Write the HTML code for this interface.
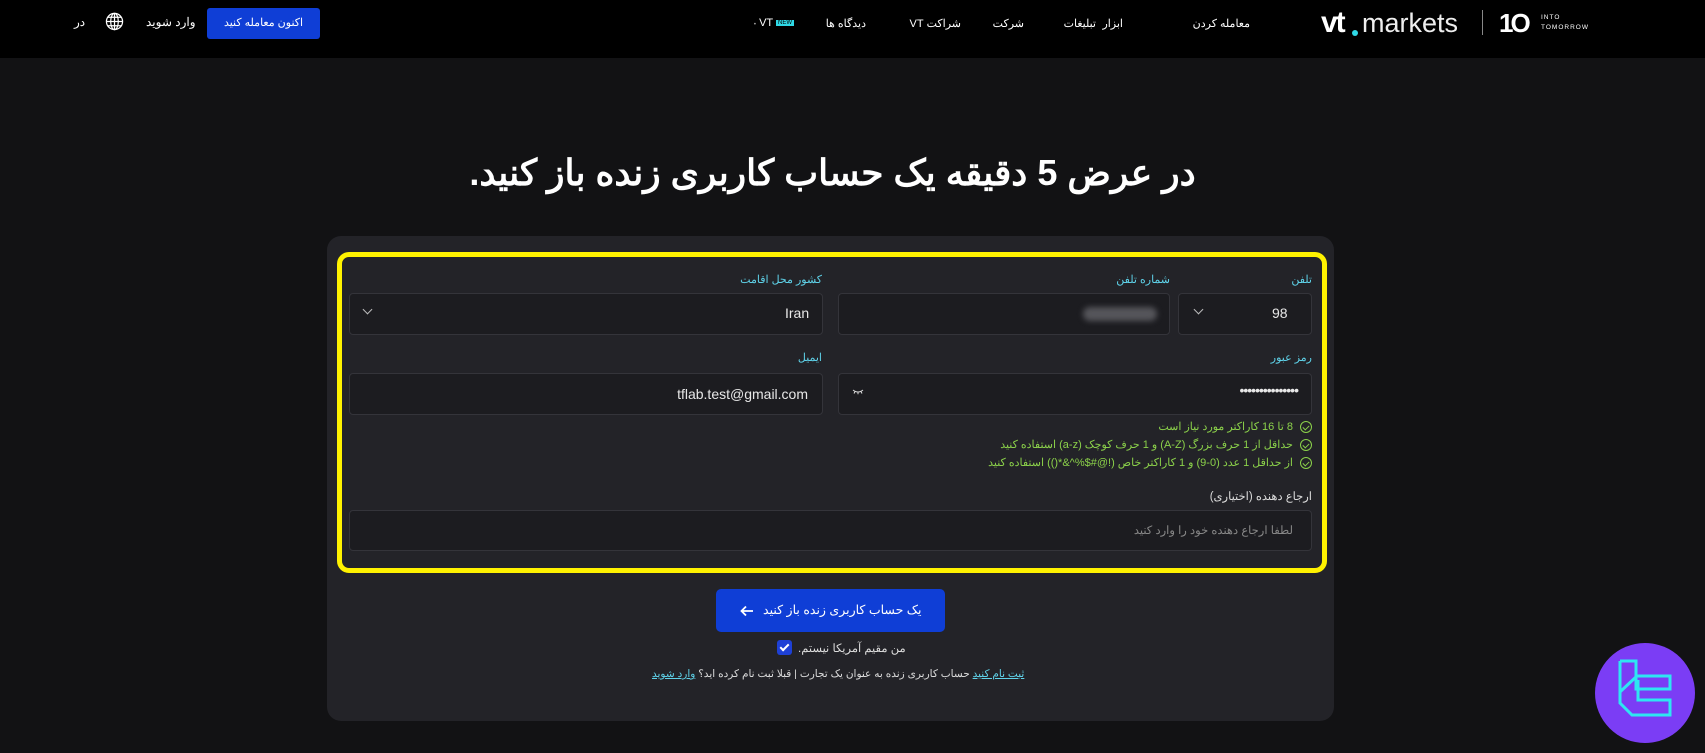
<!DOCTYPE html>
<html dir="ltr"><head><meta charset="utf-8">
<style>
*{box-sizing:border-box;margin:0;padding:0}
body{width:1705px;height:753px;background:#121214;overflow:hidden;position:relative;font-family:"Liberation Sans","Noto Sans CJK SC",sans-serif;color:#fff}
.a{position:absolute;white-space:nowrap}
.hdr{position:absolute;left:0;top:0;width:1705px;height:58px;background:#000}
.nav{font-size:11px;color:#fff;top:17px;direction:rtl}
.card{position:absolute;left:327px;top:236px;width:1007px;height:485px;background:#232328;border-radius:14px}
.yel{position:absolute;left:337px;top:252px;width:990px;height:321px;border:5px solid #fff200;border-radius:12px}
.lbl{font-size:11px;color:#5fd3ea;direction:rtl}
.inp{position:absolute;background:#1c1c20;border:1px solid #34343a;border-radius:4px}
.txt{font-size:14px;color:#e8e8e8}
.chev{width:7px;height:7px;border-right:1.3px solid #bbb;border-bottom:1.3px solid #bbb;transform:rotate(45deg)}
.val{font-size:11px;color:#8bd14a;direction:rtl;right:393px}
.ck{display:inline-block;width:12px;height:12px;border:1px solid #8bd14a;border-radius:50%;vertical-align:middle;margin-left:4px;position:relative}
.ck:after{content:"";position:absolute;left:3px;top:2px;width:3px;height:5px;border-right:1px solid #8bd14a;border-bottom:1px solid #8bd14a;transform:rotate(45deg)}
</style></head><body>
<div class="hdr"></div>
<div class="a" style="left:74px;top:15px;font-size:12px">در</div>
<svg class="a" style="left:105px;top:12px" width="19" height="19" viewBox="0 0 20 20" fill="none" stroke="#fff" stroke-width="1.3"><circle cx="10" cy="10" r="8.5"/><ellipse cx="10" cy="10" rx="4" ry="8.5"/><path d="M1.5 10h17M3 5.5h14M3 14.5h14M10 1.5v17"/></svg>
<div class="a" style="left:146px;top:15px;font-size:12px">وارد شوید</div>
<div class="a" style="left:207px;top:8px;width:113px;height:31px;background:#0f3ed6;border-radius:3px;font-size:11px;text-align:center;line-height:31px">اکنون معامله کنید</div>
<div class="a nav" style="right:911px;direction:ltr"><span style="font-size:6px;color:#aaa">•</span> VT <span style="background:#2fd9e6;color:#000;font-size:6px;padding:0 2px;vertical-align:middle">NEW</span></div>
<div class="a nav" style="right:839px">دیدگاه ها</div>
<div class="a nav" style="right:744px">شراکت VT</div>
<div class="a nav" style="right:681px">شرکت</div>
<div class="a nav" style="right:609px">تبلیغات</div>
<div class="a nav" style="right:582px">ابزار</div>
<div class="a nav" style="right:455px">معامله کردن</div>
<div class="a" style="left:1321px;top:6px;font-size:30px;font-weight:bold;letter-spacing:-2px">vt</div>
<div class="a" style="left:1352px;top:30px;width:6px;height:6px;background:#2fd9e6;border-radius:50%"></div>
<div class="a" style="left:1362px;top:8px;font-size:27px;color:#eee">markets</div>
<div class="a" style="left:1482px;top:10px;width:1px;height:25px;background:#888"></div>
<div class="a" style="left:1499px;top:8px;font-size:26px;font-weight:bold;letter-spacing:-3px">1O</div>
<div class="a" style="left:1541px;top:13px;font-size:6.5px;line-height:10px;letter-spacing:1px">INTO<br>TOMORROW</div>

<div class="a" style="left:-20px;width:1705px;top:152px;text-align:center;font-size:36px;font-weight:bold;direction:rtl">در عرض 5 دقیقه یک حساب کاربری زنده باز کنید.</div>

<div class="card"></div>
<div class="yel"></div>
<div class="a lbl" style="right:393px;top:273px">تلفن</div>
<div class="a lbl" style="right:535px;top:273px">شماره تلفن</div>
<div class="a lbl" style="right:883px;top:273px">کشور محل اقامت</div>
<div class="inp" style="left:1178px;top:293px;width:134px;height:42px"></div>
<div class="a txt" style="left:1195px;top:306px"><div class="chev"></div></div>
<div class="a txt" style="left:1272px;top:305px">98</div>
<div class="inp" style="left:838px;top:293px;width:332px;height:42px"></div>
<div class="a" style="left:1083px;top:307px;width:74px;height:14px;background:#55555a;border-radius:7px;filter:blur(3px)"></div>
<div class="inp" style="left:349px;top:293px;width:474px;height:42px"></div>
<div class="a" style="left:364px;top:306px"><div class="chev"></div></div>
<div class="a txt" style="left:785px;top:305px">Iran</div>

<div class="a lbl" style="right:393px;top:351px">رمز عبور</div>
<div class="a lbl" style="right:883px;top:351px">ایمیل</div>
<div class="inp" style="left:838px;top:373px;width:474px;height:42px"></div>
<svg class="a" style="left:852px;top:388px" width="12" height="8" viewBox="0 0 12 8" fill="none" stroke="#ddd" stroke-width="1"><path d="M1 2q5 4 10 0M3 3.5l-1 2M6 4.2v2M9 3.5l1 2"/></svg>
<div class="a txt" style="right:393px;top:382px;padding-right:14px;letter-spacing:-1px">•••••••••••••••</div>
<div class="inp" style="left:349px;top:373px;width:474px;height:42px"></div>
<div class="a txt" style="right:897px;top:386px">tflab.test@gmail.com</div>

<div class="a val" style="top:420px"><span class="ck"></span> 8 تا 16 کاراکتر مورد نیاز است</div>
<div class="a val" style="top:438px"><span class="ck"></span> حداقل از 1 حرف بزرگ (A-Z) و 1 حرف کوچک (a-z) استفاده کنید</div>
<div class="a val" style="top:456px"><span class="ck"></span> از حداقل 1 عدد (0-9) و 1 کاراکتر خاص (!@#$%^&amp;*()) استفاده کنید</div>

<div class="a" style="right:393px;top:489px;font-size:11.5px;color:#ddd;direction:rtl">ارجاع دهنده (اختیاری)</div>
<div class="inp" style="left:349px;top:510px;width:963px;height:41px"></div>
<div class="a" style="right:412px;top:523px;font-size:11.5px;color:#888;direction:rtl">لطفا ارجاع دهنده خود را وارد کنید</div>

<div class="a" style="left:716px;top:589px;width:229px;height:43px;background:#0f3ed6;border-radius:5px"></div>
<div class="a" style="left:716px;width:229px;top:602px;text-align:center;font-size:12.5px;direction:rtl">یک حساب کاربری زنده باز کنید <svg width="14" height="12" viewBox="0 0 14 12" fill="none" stroke="#fff" stroke-width="1.8" style="vertical-align:middle;margin-right:6px"><path d="M13 6H2M6 1.5L1.5 6 6 10.5"/></svg></div>
<div class="a" style="left:777px;top:640px;width:15px;height:15px;background:#1e40d6;border-radius:3px"></div>
<div class="a" style="left:782px;top:642px;width:5px;height:9px;border-right:2px solid #fff;border-bottom:2px solid #fff;transform:rotate(45deg)"></div>
<div class="a" style="left:798px;top:641px;font-size:11.5px;color:#ddd;direction:rtl">من مقیم آمریکا نیستم.</div>
<div class="a" style="left:652px;top:668px;font-size:10.5px;color:#ddd;direction:rtl"><u style="color:#5fd3ea">ثبت نام کنید</u> حساب کاربری زنده به عنوان یک تجارت | قبلا ثبت نام کرده اید؟ <u style="color:#5fd3ea">وارد شوید</u></div>

<div class="a" style="left:1595px;top:643px;width:100px;height:100px;border-radius:50%;background:#7b3df5"></div>
<svg class="a" style="left:1595px;top:643px" width="100" height="100" viewBox="0 0 100 100" fill="none" stroke="#2ee6f2" stroke-width="3"><path d="M25 18h16v28h34v-13h-34M25 18v30h1l16-15M25 48v12l12 12h38v-15h-32v-20"/></svg>
</body></html>
